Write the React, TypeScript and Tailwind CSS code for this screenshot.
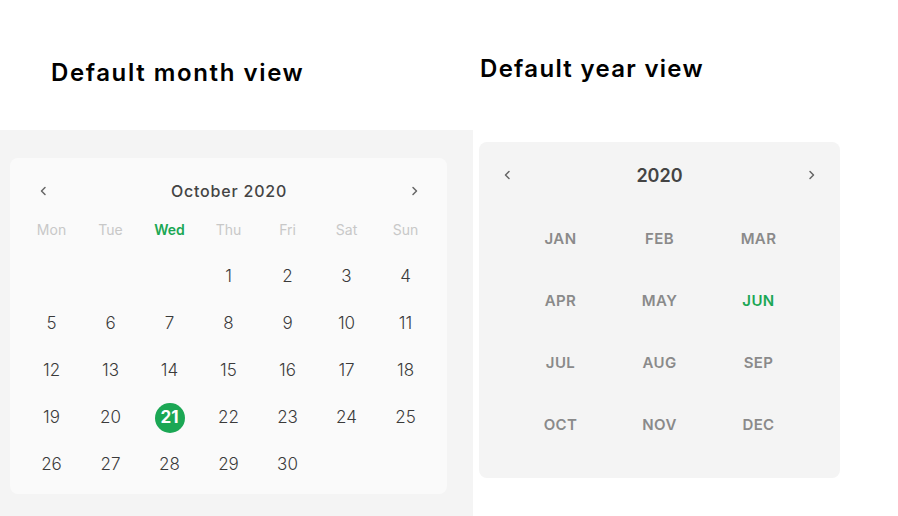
import React from 'react';

const weekdays = ['Mon', 'Tue', 'Wed', 'Thu', 'Fri', 'Sat', 'Sun'];
const months = ['JAN', 'FEB', 'MAR', 'APR', 'MAY', 'JUN', 'JUL', 'AUG', 'SEP', 'OCT', 'NOV', 'DEC'];

// October 2020 starts on a Thursday
const days: (number | null)[] = [null, null, null, ...Array.from({ length: 30 }, (_, i) => i + 1)];

const Chevron = ({ dir }: { dir: 'left' | 'right' }) => (
  <svg width="8" height="10" viewBox="0 0 8 10" fill="none">
    <path
      d={dir === 'left' ? 'M6 1.5 L2.5 5 L6 8.5' : 'M2 1.5 L5.5 5 L2 8.5'}
      stroke="#666"
      strokeWidth="1.5"
      strokeLinecap="round"
      strokeLinejoin="round"
    />
  </svg>
);

const MonthView = () => (
  <div className="w-[437px] h-[336px] rounded-lg bg-[#fafafa] px-[12px] pt-[19px]">
    <div className="flex h-[28px] items-center justify-between pl-[17px] pr-[16px]">
      <Chevron dir="left" />
      <span className="text-[16px] font-medium tracking-[0.8px] text-[#444]">October 2020</span>
      <Chevron dir="right" />
    </div>
    <div className="mt-[1px] grid grid-cols-7">
      {weekdays.map((d) => (
        <div
          key={d}
          className={
            d === 'Wed'
              ? 'flex h-[47px] items-center justify-center text-[14px] font-semibold text-[#1ba754]'
              : 'flex h-[47px] items-center justify-center text-[14px] text-[#c8c8c8]'
          }
        >
          {d}
        </div>
      ))}
      {days.map((d, i) => (
        <div key={i} className="flex h-[47px] items-center justify-center">
          {d === 21 ? (
            <span className="flex h-[30px] w-[30px] items-center justify-center rounded-full bg-[#1ba754] text-[17px] font-bold text-white">
              21
            </span>
          ) : (
            <span className="text-[17px] font-light text-[#3a3a3a]">{d ?? ''}</span>
          )}
        </div>
      ))}
    </div>
  </div>
);

const YearView = () => (
  <div className="w-[361px] h-[336px] rounded-lg bg-[#f4f4f4] px-[32px] pt-[19px]">
    <div className="-mx-[8px] flex h-[28px] items-center justify-between">
      <Chevron dir="left" />
      <span className="text-[18px] font-semibold text-[#444]">2020</span>
      <Chevron dir="right" />
    </div>
    <div className="mt-[19px] grid grid-cols-3">
      {months.map((m) => (
        <div
          key={m}
          className={
            m === 'JUN'
              ? 'flex h-[62px] items-center justify-center text-[15px] font-semibold tracking-[0.4px] text-[#1ba754]'
              : 'flex h-[62px] items-center justify-center text-[15px] font-semibold tracking-[0.4px] text-[#8a8a8a]'
          }
        >
          {m}
        </div>
      ))}
    </div>
  </div>
);

export default function App() {
  return (
    <div
      className="flex h-[516px] w-[898px] bg-white"
      style={{ fontFamily: 'Inter, "Noto Sans", sans-serif' }}
    >
      <div className="flex w-[473px] flex-col">
        <div className="flex h-[130px] items-start pl-[51px] pt-[58px]">
          <h2 className="text-[24px] font-semibold leading-[30px] tracking-[1.6px] text-black">Default month view</h2>
        </div>
        <div className="flex-1 bg-[#f4f4f4] px-[10px] pt-[28px]">
          <MonthView />
        </div>
      </div>
      <div className="flex flex-col pl-[6px]">
        <div className="h-[142px] pl-[1px] pt-[54px]">
          <h2 className="text-[24px] font-semibold leading-[30px] tracking-[1.3px] text-black">Default year view</h2>
        </div>
        <YearView />
      </div>
    </div>
  );
}
